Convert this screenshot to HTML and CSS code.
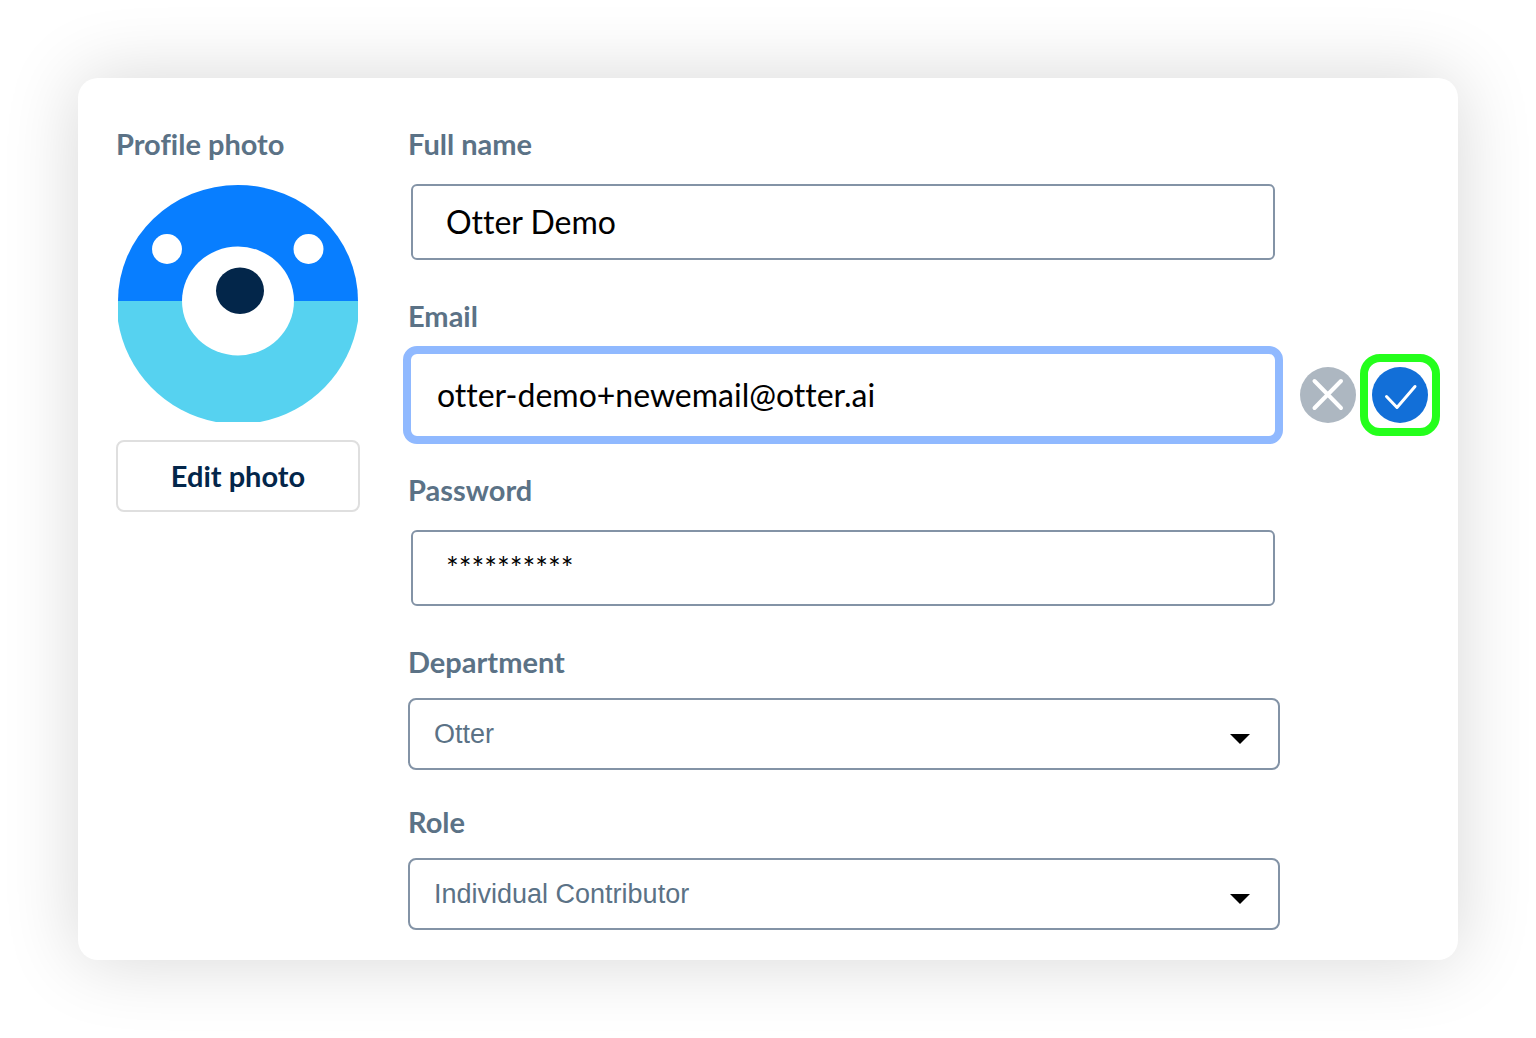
FILE: index.html
```html
<!DOCTYPE html>
<html lang="en">
<head>
<meta charset="utf-8">
<meta name="viewport" content="width=device-width, initial-scale=1">
<title>Account settings</title>
<link rel="stylesheet" href="styles.css">
</head>
<body>
<main class="card">
  <section class="photo">
    <h2 class="label photo-title">Profile photo</h2>
    <svg class="avatar" viewBox="0 0 240 237" role="img" aria-label="Otter avatar">
      <clipPath id="avatar-shape">
        <path d="M0 116A120 116 0 0 1 240 116V136A122 122 0 0 1 142 237H98A122 122 0 0 1 0 136Z"/>
      </clipPath>
      <g clip-path="url(#avatar-shape)">
        <rect width="240" height="116" fill="#087eff"/>
        <rect y="116" width="240" height="121" fill="#56d2f0"/>
      </g>
      <circle cx="49" cy="64" r="15" fill="#fff"/>
      <circle cx="190.5" cy="64" r="15" fill="#fff"/>
      <ellipse cx="120" cy="116" rx="56" ry="54.5" fill="#fff"/>
      <ellipse cx="122" cy="105.700" rx="24" ry="23.200" fill="#03264a"/>
    </svg>
    <button class="edit" type="button">Edit photo</button>
  </section>

  <form class="form">
    <div class="field field-text">
      <label class="label" for="name">Full name</label>
      <input class="input" id="name" type="text" value="Otter Demo">
    </div>

    <div class="field field-email">
      <label class="label" for="email">Email</label>
      <div class="email-row">
        <input class="input input-active" id="email" type="text" inputmode="email" value="otter-demo+newemail@otter.ai">
        <button class="round cancel" type="button" aria-label="Cancel">
          <svg viewBox="0 0 56 56"><path d="M14.500 14L41 41M41 14L14.500 41" stroke-width="4"/></svg>
        </button>
        <span class="highlight">
          <button class="round confirm" type="button" aria-label="Save email">
            <svg viewBox="0 0 56 56"><path d="M14.500 29.500L25 40.500L43 19.500" stroke-width="3"/></svg>
          </button>
        </span>
      </div>
    </div>

    <div class="field field-text">
      <label class="label" for="password">Password</label>
      <input class="input input-masked" id="password" type="text" value="**********" readonly>
    </div>

    <div class="field field-select">
      <label class="label" for="department">Department</label>
      <div class="select-box">
        <select class="select" id="department"><option>Otter</option></select>
        <span class="arrow"></span>
      </div>
    </div>

    <div class="field field-select">
      <label class="label" for="role">Role</label>
      <div class="select-box">
        <select class="select" id="role"><option>Individual Contributor</option></select>
        <span class="arrow"></span>
      </div>
    </div>
  </form>
</main>
</body>
</html>
```
FILE: styles.css
```css
* {
  box-sizing: border-box;
}

body {
  margin: 0;
  padding: 78px;
  background: #fff;
  color: #000;
  font-family: Lato, "Liberation Sans", sans-serif;
}

.card {
  display: grid;
  grid-template-columns: 244px 1fr;
  column-gap: 48px;
  align-items: start;
  padding: 48px 18px 30px 38px;
  border-radius: 20px;
  background: #fff;
  box-shadow: 0 0 76px rgba(0, 0, 0, 0.16);
}

.label,
.edit,
.input {
  font-variant-ligatures: none;
}

.label {
  margin: 0;
  color: #5b7286;
  font-size: 29px;
  font-weight: 700;
  line-height: 36px;
}

.photo {
  display: flex;
  flex-direction: column;
}

.photo-title {
  margin-bottom: 23px;
}

.avatar {
  display: block;
  width: 240px;
  height: 237px;
  margin: 0 2px 18px;
}

.edit {
  height: 72px;
  padding: 0;
  border: 2px solid #dfdfdf;
  border-radius: 8px;
  background: #fff;
  color: #03264a;
  font-family: inherit;
  font-size: 29px;
  font-weight: 700;
  line-height: 36px;
}

.form {
  display: flex;
  flex-direction: column;
  gap: 34px;
}

.field {
  display: flex;
  flex-direction: column;
  padding-right: 160px;
}

.field-text {
  gap: 22px;
  padding-bottom: 4px;
}

.field-select {
  gap: 18px;
}

.field-email {
  gap: 12px;
  margin-bottom: -6px;
  padding-right: 0;
}

.input {
  min-width: 0;
  height: 76px;
  margin: 0 5px 0 3px;
  padding: 0 33px 2px;
  border: 2px solid #8393a6;
  border-radius: 6px;
  outline: 0;
  background: #fff;
  color: #000;
  font-family: inherit;
  font-size: 32px;
  line-height: 40px;
}

.input-masked {
  font-size: 30px;
}

.email-row {
  display: flex;
  align-items: center;
  margin-left: -5px;
}

.input-active {
  flex: 1;
  height: 98px;
  margin: 0 17px 0 0;
  padding: 0 26px 2px;
  border: 8px solid #90b9ff;
  border-radius: 14px;
}

.round {
  flex: none;
  width: 56px;
  height: 56px;
  padding: 0;
  border: 0;
  border-radius: 50%;
}

.round svg {
  display: block;
  fill: none;
  stroke: #fff;
  stroke-linecap: round;
  stroke-linejoin: round;
}

.cancel {
  margin-right: 4px;
  background: #adb7c1;
}

.confirm {
  background: #126fd8;
}

.highlight {
  display: grid;
  flex: none;
  place-items: center;
  width: 80px;
  height: 82px;
  border: 8px solid #24ff1c;
  border-radius: 20px;
}

.select-box {
  display: grid;
  align-items: center;
}

.select,
.arrow {
  grid-area: 1 / 1;
}

.select {
  appearance: none;
  width: 100%;
  height: 72px;
  padding: 0 60px 0 24px;
  border: 2px solid #8393a6;
  border-radius: 8px;
  background: #fff;
  color: #5b7286;
  font: 400 27px/36px "Liberation Sans", Arial, sans-serif;
}

.arrow {
  justify-self: end;
  width: 20px;
  height: 10px;
  margin: 10px 30px 0 0;
  background: #000;
  clip-path: polygon(0 0, 100% 0, 50% 100%);
  pointer-events: none;
}
```
